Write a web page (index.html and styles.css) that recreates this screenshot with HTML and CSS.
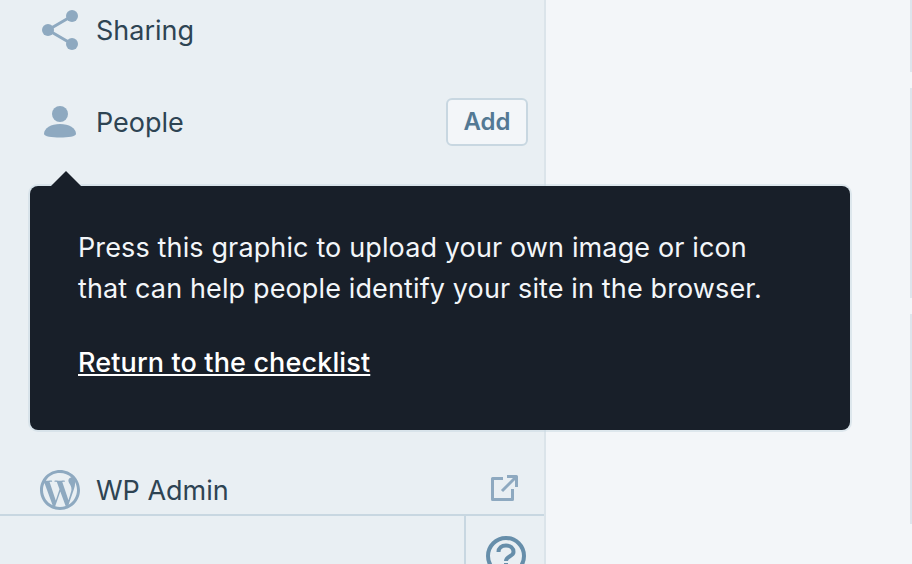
FILE: index.html
```html
<!DOCTYPE html>
<html lang="en">
<head>
    <meta charset="UTF-8">
    <meta name="viewport" content="width=device-width, initial-scale=1.0">
    <title>Site menu</title>
    <link rel="stylesheet" href="styles.css">
</head>
<body>
    <div class="layout">
        <aside class="sidebar">
            <div class="menu">
                <div class="menu-item">
                    <svg class="menu-icon" viewBox="0 0 40 40">
                        <path class="share-line" d="M32 6 8 20l24 14"/>
                        <circle cx="32" cy="6" r="6"/>
                        <circle cx="8" cy="20" r="6"/>
                        <circle cx="32" cy="34" r="6"/>
                    </svg>
                    <span class="menu-label">Sharing</span>
                </div>
                <div class="menu-item">
                    <svg class="menu-icon" viewBox="0 0 40 40">
                        <circle cx="20" cy="12" r="8"/>
                        <path d="M4 32c0-6 7-10 16-10s16 4 16 10c0 2.500-8 3.500-16 3.500S4 34.500 4 32z"/>
                    </svg>
                    <span class="menu-label">People</span>
                    <button class="add-btn">Add</button>
                </div>
                <div class="menu-hidden"></div>
                <div class="menu-item">
                    <svg class="menu-icon" viewBox="2 2 20 20">
                        <path d="M12 2C6.477 2 2 6.477 2 12s4.477 10 10 10 10-4.477 10-10S17.523 2 12 2zM3.500 12c0-1.232.264-2.402.736-3.459L8.291 19.650C5.455 18.272 3.500 15.365 3.500 12zm8.500 8.501c-.834 0-1.640-.122-2.401-.346l2.551-7.411 2.613 7.158c.017.042.038.081.061.117-.884.311-1.833.482-2.824.482zm1.172-12.486c.512-.027.973-.081.973-.081.458-.054.404-.727-.054-.701 0 0-1.377.108-2.266.108-.835 0-2.239-.108-2.239-.108-.459-.026-.512.674-.054.701 0 0 .434.054.892.081l1.324 3.629-1.860 5.579-3.096-9.208c.512-.027.973-.081.973-.081.458-.054.403-.727-.055-.701 0 0-1.376.108-2.265.108-.160 0-.347-.004-.547-.010C6.418 4.837 9.040 3.500 12 3.500c2.206 0 4.217.844 5.730 2.226-.037-.002-.073-.007-.111-.007-.835 0-1.428.727-1.428 1.509 0 .701.404 1.293.835 1.994.323.566.701 1.293.701 2.344 0 .727-.280 1.572-.647 2.749l-.848 2.833-3.072-9.133zm3.101 11.332l2.596-7.506c.485-1.213.647-2.182.647-3.045 0-.313-.021-.603-.057-.874.664 1.211 1.042 2.603 1.042 4.078 0 3.129-1.696 5.861-4.228 7.347z"/>
                    </svg>
                    <span class="menu-label">WP Admin</span>
                    <svg class="external-icon" viewBox="0 0 28 28">
                        <path d="M13 4.500H2.500v21h20V15M17 2.500h9.500V13M26.500 2.500 12 17"/>
                    </svg>
                </div>
            </div>
            <div class="sidebar-footer">
                <div class="footer-space"></div>
                <div class="help-cell">
                    <svg class="help-icon" viewBox="0 0 40 40">
                        <circle cx="20" cy="20" r="18"/>
                        <path d="M12.500 16c0-4 3-6.500 7.500-6.500s7.500 2.500 7.500 6.500c0 4.500-7.500 4-7.500 9"/>
                        <path d="M20 27v4"/>
                    </svg>
                </div>
            </div>
        </aside>
        <main class="content">
            <div class="rail">
                <span class="rail-seg rail-first"></span>
                <span class="rail-seg"></span>
                <span class="rail-seg"></span>
            </div>
        </main>
    </div>

    <div class="tooltip">
        <span class="tooltip-arrow"></span>
        <p>Press this graphic to upload your own image or icon<br>that can help people identify your site in the browser.</p>
        <a href="#" class="tooltip-link">Return to the checklist</a>
    </div>
</body>
</html>
```

FILE: styles.css
```css
html, body {
    margin: 0;
    height: 100%;
    overflow: hidden;
}
body {
    font-family: Inter, "Noto Sans", sans-serif;
    color: #2e4453;
    background-color: #f3f6f9;
}
.layout {
    display: flex;
    height: 564px;
}
.sidebar {
    width: 544px;
    height: 564px;
    flex: none;
    display: flex;
    flex-direction: column;
    background-color: #e9eff3;
    border-right: 2px solid #dbe4ea;
}
.menu {
    flex: 1;
    display: flex;
    flex-direction: column;
    gap: 44px;
    padding-top: 6px;
}
.menu-item {
    height: 48px;
    display: flex;
    align-items: center;
    padding: 0 16px 0 40px;
}
.menu-icon {
    width: 40px;
    height: 40px;
    fill: #8ea9c0;
    flex: none;
}
.share-line {
    fill: none;
    stroke: #8ea9c0;
    stroke-width: 3;
}
.menu-label {
    margin-left: 16px;
    font-size: 27px;
    flex: 1;
}
.menu-hidden {
    height: 232px;
}
.add-btn {
    width: 82px;
    height: 48px;
    padding: 0 0 2px;
    font-family: inherit;
    font-size: 24px;
    font-weight: 600;
    color: #537994;
    background: #f3f6f9;
    border: 2px solid #c8d7e1;
    border-radius: 6px;
}
.external-icon {
    width: 28px;
    height: 28px;
    margin: 0 10px 4px 0;
    fill: none;
    stroke: #8ea9c0;
    stroke-width: 3;
    stroke-linejoin: round;
}
.sidebar-footer {
    height: 48px;
    display: flex;
    border-top: 2px solid #c8d7e1;
    overflow: hidden;
}
.footer-space {
    width: 464px;
    border-right: 2px solid #c8d7e1;
}
.help-cell {
    flex: 1;
    display: flex;
    justify-content: center;
    padding: 20px 0 0 2px;
}
.help-icon {
    width: 40px;
    height: 40px;
    flex: none;
    fill: none;
    stroke: #668eaa;
    stroke-width: 4;
}
.content {
    flex: 1;
    display: flex;
    justify-content: flex-end;
}
.rail {
    width: 2px;
    display: flex;
    flex-direction: column;
    gap: 16px;
}
.rail-seg {
    height: 210px;
    flex: none;
    background: #dde5ec;
}
.rail-first {
    height: 72px;
}
.tooltip {
    position: absolute;
    left: 30px;
    top: 186px;
    width: 820px;
    height: 244px;
    box-sizing: border-box;
    padding: 41px 48px 0;
    background: #181f29;
    border-radius: 8px;
    box-shadow: 0 0 0 2px rgba(200, 215, 225, 0.5);
    color: #f3f6f9;
    font-size: 27px;
    letter-spacing: 0.13px;
    line-height: 41px;
}
.tooltip p {
    margin: 0 0 33px;
}
.tooltip-arrow {
    position: absolute;
    left: 21px;
    top: -15px;
    width: 0;
    height: 0;
    border-left: 15px solid transparent;
    border-right: 15px solid transparent;
    border-bottom: 15px solid #181f29;
}
.tooltip-link {
    color: #fff;
    font-weight: 500;
    text-decoration: underline;
}
```
